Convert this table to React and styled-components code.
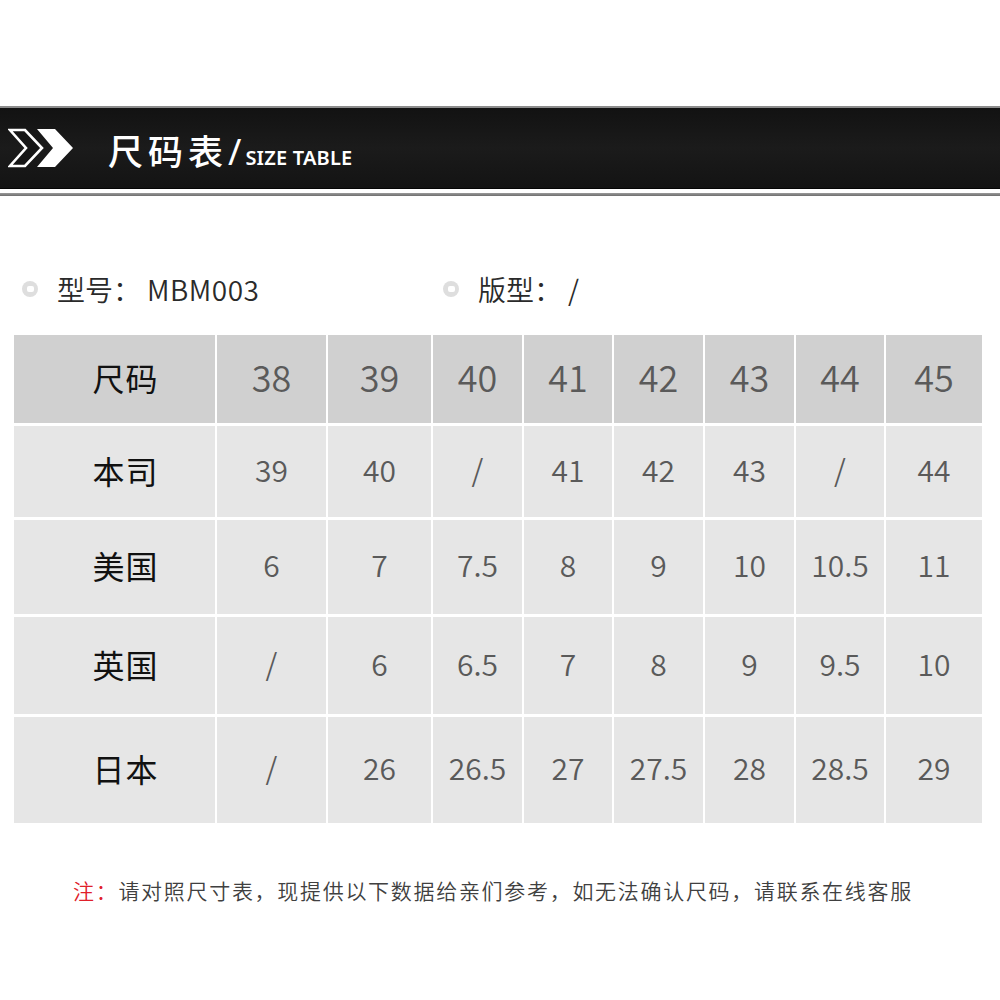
import React from 'react';
import styled, { createGlobalStyle } from 'styled-components';

const GlobalStyle = createGlobalStyle`
  html, body {
    margin: 0;
    padding: 0;
    background: #ffffff;
  }
  body {
    font-family: "Noto Sans CJK SC", "Noto Sans", sans-serif;
  }
`;

const Page = styled.div`
  width: 1000px;
  padding-top: 106px;
  padding-bottom: 60px;
`;

const HeaderBar = styled.div`
  height: 80px;
  border-top: 2px solid #8c8c8c;
  border-bottom: 1px solid #050505;
  background: linear-gradient(#121212, #1b1b1b 50%, #131313);
  display: flex;
  align-items: center;
  padding-left: 8px;
`;

const Chevrons = styled.svg`
  width: 66px;
  height: 40px;
  flex-shrink: 0;
`;

const Title = styled.div`
  margin-left: 34px;
  display: flex;
  align-items: baseline;
  color: #ffffff;
  padding-top: 4px;
`;

const TitleCn = styled.span`
  font-family: "Noto Sans CJK SC", sans-serif;
  font-size: 35px;
  font-weight: 500;
  letter-spacing: 5px;
`;

const TitleSlash = styled.span`
  font-family: "Noto Sans", sans-serif;
  font-size: 36px;
  font-weight: 400;
  margin-right: 4px;
`;

const TitleEn = styled.span`
  font-family: "Noto Sans", sans-serif;
  font-size: 20px;
  font-weight: 600;
  letter-spacing: 0.2px;
`;

const Rule = styled.div`
  margin-top: 4px;
  height: 3px;
  background: linear-gradient(#9a9a9a, #6e6e6e);
`;

const InfoRow = styled.div`
  margin-top: 75px;
  display: flex;
  padding-left: 22px;
  height: 36px;
  align-items: center;
`;

const InfoItem = styled.div`
  display: flex;
  align-items: center;
  width: ${(p) => p.width || 'auto'};
  font-size: 28px;
  font-weight: 350;
  color: #2a2a2a;
  line-height: 36px;
  font-family: "Noto Sans CJK SC", sans-serif;
`;

const Bullet = styled.span`
  width: 16px;
  height: 16px;
  border-radius: 50%;
  background: #dedede;
  display: flex;
  align-items: center;
  justify-content: center;
  margin-right: 19px;

  &::after {
    content: '';
    width: 7px;
    height: 6px;
    border-radius: 2px;
    background: #ffffff;
  }
`;

const Code = styled.span`
  margin-left: 6px;
  letter-spacing: 0.5px;
`;

const Table = styled.div`
  margin: 28px 0 0 14px;
  width: 968px;
  display: grid;
  grid-template-columns: 201px 109px 103px 89px 88px 89px 89px 88px 96px;
  grid-template-rows: 88px 91px 94px 97px 106px;
  column-gap: 2px;
  row-gap: 3px;
  background: #ffffff;
`;

const Cell = styled.div`
  background: ${(p) => (p.head ? '#d0d0d0' : '#e6e6e6')};
  display: flex;
  align-items: center;
  justify-content: center;
  color: #5a5a5a;
  font-family: "Noto Sans CJK SC", sans-serif;
  font-weight: 350;
  font-size: ${(p) => (p.head ? '36px' : '30px')};
  padding-bottom: 6px;
`;

const LabelCell = styled.div`
  background: ${(p) => (p.head ? '#d0d0d0' : '#e6e6e6')};
  display: flex;
  align-items: center;
  justify-content: center;
  padding: 0 0 4px 22px;
  color: #111111;
  font-family: "Noto Sans CJK SC", sans-serif;
  font-weight: 400;
  font-size: 32px;
  letter-spacing: 1px;
`;

const Note = styled.div`
  margin-top: 52px;
  padding-left: 73px;
  font-family: "Noto Sans CJK SC", sans-serif;
  font-weight: 350;
  font-size: 21px;
  letter-spacing: 1.7px;
  color: #404040;
  line-height: 30px;
`;

const NoteMark = styled.span`
  color: #e0202a;
`;

const sizes = ['38', '39', '40', '41', '42', '43', '44', '45'];

const rows = [
  { label: '本司', values: ['39', '40', '/', '41', '42', '43', '/', '44'] },
  { label: '美国', values: ['6', '7', '7.5', '8', '9', '10', '10.5', '11'] },
  { label: '英国', values: ['/', '6', '6.5', '7', '8', '9', '9.5', '10'] },
  { label: '日本', values: ['/', '26', '26.5', '27', '27.5', '28', '28.5', '29'] },
];

const App = () => {
  return (
    <Page>
      <GlobalStyle />
      <HeaderBar>
        <Chevrons viewBox="0 0 66 40" aria-hidden="true">
          <polygon
            points="2,2 17,2 34,20 17,38 2,38 18,20"
            fill="#161616"
            stroke="#ffffff"
            strokeWidth="2.6"
          />
          <polygon points="29,1 47,1 65,20 47,39 29,39 45,20" fill="#ffffff" />
        </Chevrons>
        <Title>
          <TitleCn>尺码表</TitleCn>
          <TitleSlash>/</TitleSlash>
          <TitleEn>SIZE TABLE</TitleEn>
        </Title>
      </HeaderBar>
      <Rule />

      <InfoRow>
        <InfoItem width="421px">
          <Bullet />
          型号：<Code>MBM003</Code>
        </InfoItem>
        <InfoItem>
          <Bullet />
          版型：<Code>/</Code>
        </InfoItem>
      </InfoRow>

      <Table>
        <LabelCell head>尺码</LabelCell>
        {sizes.map((s) => (
          <Cell head key={s}>
            {s}
          </Cell>
        ))}
        {rows.map((row) => (
          <React.Fragment key={row.label}>
            <LabelCell>{row.label}</LabelCell>
            {row.values.map((v, i) => (
              <Cell key={i}>{v}</Cell>
            ))}
          </React.Fragment>
        ))}
      </Table>

      <Note>
        <NoteMark>注：</NoteMark>请对照尺寸表，现提供以下数据给亲们参考，如无法确认尺码，请联系在线客服
      </Note>
    </Page>
  );
};

export default App;
